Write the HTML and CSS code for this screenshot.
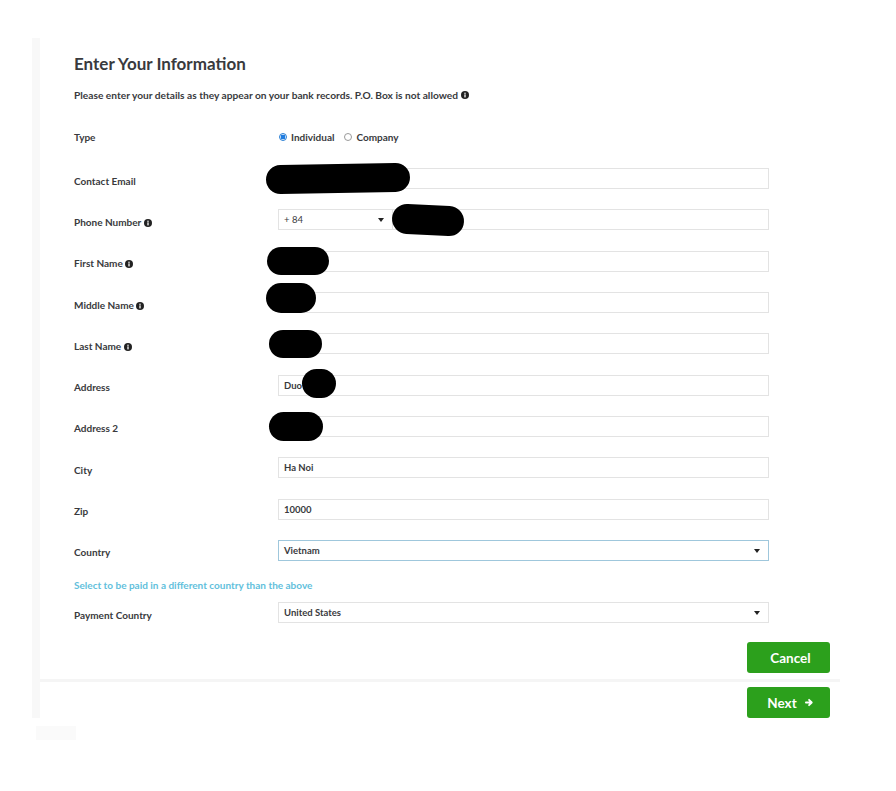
FILE: index.html
```html
<!DOCTYPE html>
<html lang="en">
<head>
<meta charset="utf-8">
<title>Enter Your Information</title>
<link rel="stylesheet" href="styles.css">
</head>
<body>
<div class="page">
  <div class="panel">
    <div class="content">
      <h1 class="title">Enter Your Information</h1>
      <p class="subtitle">Please enter your details as they appear on your bank records. P.O. Box is not allowed <svg class="info" viewBox="0 0 10 10"><circle cx="5" cy="5" r="5" fill="#222"/><rect x="4.2" y="4.2" width="1.6" height="3.8" fill="#fff"/><circle cx="5" cy="2.7" r="0.9" fill="#fff"/></svg></p>

      <div class="form">
        <div class="row row-type">
          <div class="label">Type</div>
          <div class="field radios">
            <span class="radio checked"></span><span class="radio-text">Individual</span>
            <span class="radio"></span><span class="radio-text">Company</span>
          </div>
        </div>

        <div class="row">
          <div class="label">Contact Email</div>
          <div class="field"><div class="input"></div><span class="blob blob-email"></span></div>
        </div>

        <div class="row">
          <div class="label">Phone Number <svg class="info" viewBox="0 0 10 10"><circle cx="5" cy="5" r="5" fill="#222"/><rect x="4.2" y="4.2" width="1.6" height="3.8" fill="#fff"/><circle cx="5" cy="2.7" r="0.9" fill="#fff"/></svg></div>
          <div class="field phone">
            <div class="input select code">+ 84<span class="caret"></span></div>
            <div class="input grow"></div>
            <span class="blob blob-phone"></span>
          </div>
        </div>

        <div class="row">
          <div class="label">First Name <svg class="info" viewBox="0 0 10 10"><circle cx="5" cy="5" r="5" fill="#222"/><rect x="4.2" y="4.2" width="1.6" height="3.8" fill="#fff"/><circle cx="5" cy="2.7" r="0.9" fill="#fff"/></svg></div>
          <div class="field"><div class="input"></div><span class="blob blob-first"></span></div>
        </div>

        <div class="row">
          <div class="label">Middle Name <svg class="info" viewBox="0 0 10 10"><circle cx="5" cy="5" r="5" fill="#222"/><rect x="4.2" y="4.2" width="1.6" height="3.8" fill="#fff"/><circle cx="5" cy="2.7" r="0.9" fill="#fff"/></svg></div>
          <div class="field"><div class="input"></div><span class="blob blob-middle"></span></div>
        </div>

        <div class="row">
          <div class="label">Last Name <svg class="info" viewBox="0 0 10 10"><circle cx="5" cy="5" r="5" fill="#222"/><rect x="4.2" y="4.2" width="1.6" height="3.8" fill="#fff"/><circle cx="5" cy="2.7" r="0.9" fill="#fff"/></svg></div>
          <div class="field"><div class="input"></div><span class="blob blob-last"></span></div>
        </div>

        <div class="row">
          <div class="label">Address</div>
          <div class="field"><div class="input">Duo</div><span class="blob blob-address"></span></div>
        </div>

        <div class="row">
          <div class="label">Address 2</div>
          <div class="field"><div class="input"></div><span class="blob blob-address2"></span></div>
        </div>

        <div class="row">
          <div class="label">City</div>
          <div class="field"><div class="input">Ha Noi</div></div>
        </div>

        <div class="row">
          <div class="label">Zip</div>
          <div class="field"><div class="input">10000</div></div>
        </div>

        <div class="row">
          <div class="label">Country</div>
          <div class="field"><div class="input select focused">Vietnam<span class="caret"></span></div></div>
        </div>

        <div class="link">Select to be paid in a different country than the above</div>

        <div class="row">
          <div class="label">Payment Country</div>
          <div class="field"><div class="input select">United States<span class="caret"></span></div></div>
        </div>
      </div>
    </div>

    <div class="actions top">
      <button class="btn">Cancel</button>
    </div>
    <div class="divider"></div>
    <div class="actions">
      <button class="btn">Next <svg class="arrow" viewBox="0 0 10 10"><path d="M1 5h6M4.5 2L7.5 5L4.5 8" stroke="#fff" stroke-width="2" fill="none" stroke-linecap="round" stroke-linejoin="round"/></svg></button>
    </div>
  </div>
  <div class="panel-foot"></div>
</div>
</body>
</html>
```

FILE: styles.css
```css
* { box-sizing: border-box; }

body {
  margin: 0;
  background: #ffffff;
  font-family: "Lato", "Noto Sans", sans-serif;
  color: #393a3d;
}

.page {
  padding-top: 38px;
  padding-left: 32px;
}

.panel {
  width: 808px;
  border-left: 8px solid #f8f8f8;
}

.content {
  padding-left: 34px;
  padding-top: 16px;
}

.title {
  margin: 0;
  font-size: 17px;
  line-height: 20px;
  font-weight: 700;
  color: #393a3d;
}

.subtitle {
  margin: 15px 0 0;
  font-size: 10.2px;
  line-height: 12px;
  font-weight: 700;
  color: #393a3d;
  display: flex;
  align-items: center;
  gap: 3px;
}

.info {
  width: 8px;
  height: 8px;
  vertical-align: -1px;
}

.form {
  margin-top: 15px;
  width: 695px;
}

.row {
  display: flex;
  align-items: center;
  height: 41.3px;
}

.row-type {
  height: 42px;
}

.label {
  width: 204px;
  flex: none;
  font-size: 10px;
  font-weight: 700;
  padding-top: 4px;
  color: #393a3d;
}

.row-type .label { padding-top: 0; }

.field {
  flex: 1;
  position: relative;
  display: flex;
  align-items: center;
}

.radios {
  font-size: 10px;
  font-weight: 700;
  padding-left: 1px;
}

.radio {
  width: 8px;
  height: 8px;
  border-radius: 50%;
  border: 1px solid #9a9a9a;
  background: #fff;
  margin-right: 4px;
}

.radio.checked {
  border: 1px solid #2a7fd4;
  background: radial-gradient(circle, #1f7ce0 55%, #d7e9fb 60%);
}

.radio-text {
  margin-right: 10px;
}

.input {
  flex: 1;
  height: 21px;
  border: 1px solid #e3e3e3;
  background: #fff;
  font-size: 9.5px;
  font-weight: 700;
  line-height: 19px;
  padding-left: 5px;
  color: #393a3d;
  position: relative;
}

.select .caret {
  position: absolute;
  right: 8px;
  top: 8px;
  width: 0;
  height: 0;
  border-left: 3px solid transparent;
  border-right: 3px solid transparent;
  border-top: 4px solid #222;
}

.focused {
  border-color: #9fc7dc;
}

.phone .code {
  flex: none;
  width: 115px;
  font-weight: 400;
}

.phone .grow {
  border-left: none;
}

.blob {
  position: absolute;
  background: #000;
  border-radius: 15px;
}

.blob-email   { left: -12px; top: -4px; width: 144px; height: 29px; transform: rotate(-1deg); }
.blob-phone   { left: 114px; top: -4px; width: 72px; height: 30px; transform: rotate(3deg); }
.blob-first   { left: -11px; top: -4px; width: 62px; height: 28px; }
.blob-middle  { left: -12px; top: -9px; width: 50px; height: 30px; }
.blob-last    { left: -9px;  top: -3px; width: 53px; height: 28px; }
.blob-address { left: 24px;  top: -6px; width: 34px; height: 29px; }
.blob-address2{ left: -9px;  top: -4px; width: 54px; height: 29px; }

.link {
  margin-top: 7px;
  font-size: 10px;
  line-height: 14px;
  font-weight: 700;
  color: #62bfdc;
}

.actions {
  display: flex;
  justify-content: flex-end;
  padding-right: 10px;
}

.actions.top {
  margin-top: 9px;
}

.btn {
  width: 83px;
  height: 31px;
  border: none;
  border-radius: 3px;
  background: #2ca01c;
  color: #ffffff;
  font-family: "Lato", "Noto Sans", sans-serif;
  font-size: 13.5px;
  font-weight: 700;
  display: flex;
  align-items: center;
  justify-content: center;
  gap: 8px;
  padding: 0 0 0 4px;
}

.arrow {
  width: 9px;
  height: 9px;
}

.divider {
  height: 3px;
  background: #f5f5f5;
  margin-top: 6px;
  margin-bottom: 5px;
}

.panel-foot {
  width: 40px;
  height: 14px;
  margin-left: 4px;
  background: #fafafa;
  margin-top: 8px;
}
```
